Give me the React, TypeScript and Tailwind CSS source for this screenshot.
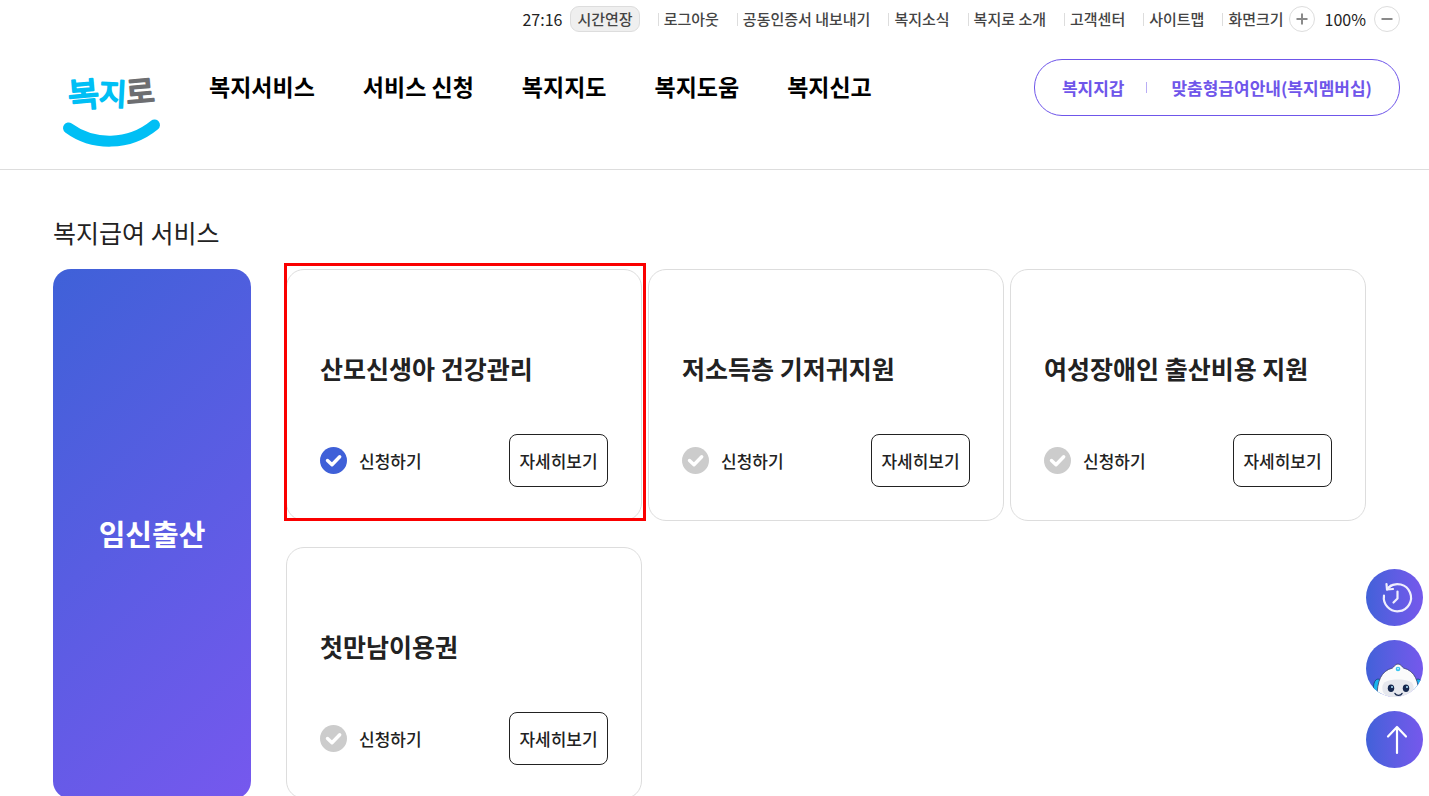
import { useState } from "react";

const utilityLinks = [
  "로그아웃",
  "공동인증서 내보내기",
  "복지소식",
  "복지로 소개",
  "고객센터",
  "사이트맵",
];

const mainMenu = ["복지서비스", "서비스 신청", "복지지도", "복지도움", "복지신고"];

const services = [
  { id: "maternal", name: "산모신생아 건강관리", highlighted: true },
  { id: "diaper", name: "저소득층 기저귀지원", highlighted: false },
  { id: "childbirth", name: "여성장애인 출산비용 지원", highlighted: false },
  { id: "voucher", name: "첫만남이용권", highlighted: false },
];

function Logo() {
  return (
    <svg viewBox="0 0 98 92" className="h-[92px] w-[98px] overflow-visible" role="img" aria-label="복지로">
      <g
        fontFamily="'Noto Sans CJK KR', sans-serif"
        strokeLinejoin="round"
        strokeLinecap="round"
        strokeWidth="2"
      >
        <text x="5" y="50" fontSize="34" fill="#00bff5" stroke="#00bff5" transform="rotate(-5 20 38)">
          복
        </text>
        <text x="36" y="48" fontSize="30" fill="#00bff5" stroke="#00bff5" transform="rotate(3 48 36)">
          지
        </text>
        <text x="63" y="46" fontSize="31" fill="#6d6e71" stroke="#6d6e71" transform="rotate(-5 78 34)">
          로
        </text>
      </g>
      <path d="M5.500 71C30 89 66 89 91.500 68" fill="none" stroke="#00bff5" strokeWidth="11" strokeLinecap="round" />
    </svg>
  );
}

function SizeButton({ label, plus, onClick }: { label: string; plus?: boolean; onClick: () => void }) {
  return (
    <button
      type="button"
      aria-label={label}
      onClick={onClick}
      className="flex size-[26px] items-center justify-center rounded-full border border-[#dddddd] bg-white"
    >
      <svg viewBox="0 0 12 12" className="size-3" stroke="#8a8a8a" strokeWidth="2">
        <path d={plus ? "M0.5 6H11.5M6 0.5V11.5" : "M0.5 6H11.5"} />
      </svg>
    </button>
  );
}

function Header() {
  const [zoom, setZoom] = useState(100);
  return (
    <header className="border-b border-[#dddddd] pt-1.5 pr-[29px] pb-5 pl-[63px]">
      <div className="flex h-[26px] items-center justify-end text-[15px] font-medium whitespace-nowrap text-[#444444]">
        <span className="text-base font-normal text-[#222222]">27:16</span>
        <button
          type="button"
          className="mr-[18px] ml-2 flex h-[26px] items-center rounded-[9px] border border-[#dddddd] bg-[#efefef] px-1.5"
        >
          시간연장
        </button>
        <nav aria-label="바로가기" className="mr-[18px] flex items-center gap-[18px]">
          {utilityLinks.map((link) => (
            <span key={link} className="flex items-center gap-[5px]">
              <span className="h-[13px] w-px bg-[#dddddd]" />
              <a href="#">{link}</a>
            </span>
          ))}
        </nav>
        <span className="mr-[5px] flex items-center gap-[5px]">
          <span className="h-[13px] w-px bg-[#dddddd]" />
          화면크기
        </span>
        <SizeButton label="확대" plus onClick={() => setZoom(zoom + 10)} />
        <span className="mr-2 ml-2.5 text-base font-normal text-[#222222]">{zoom}%</span>
        <SizeButton label="축소" onClick={() => setZoom(zoom - 10)} />
      </div>
      <div className="mt-[25px] flex items-start">
        <a href="#" className="mr-12">
          <Logo />
        </a>
        <nav
          aria-label="주 메뉴"
          className="flex h-[58px] items-center gap-12 text-[23px] font-bold whitespace-nowrap text-black"
        >
          {mainMenu.map((item) => (
            <a key={item} href="#">
              {item}
            </a>
          ))}
        </nav>
        <div className="mt-0.5 ml-auto flex h-[57px] items-center rounded-[28px] border border-[#6f56ea] px-[27px] text-[17px] font-bold whitespace-nowrap text-[#6f56ea]">
          <a href="#">복지지갑</a>
          <span className="mr-6 ml-[22px] h-[11px] w-px bg-[#b9adf5]" />
          <a href="#">맞춤형급여안내(복지멤버십)</a>
        </div>
      </div>
    </header>
  );
}

function ServiceCard({
  id,
  name,
  highlighted,
}: {
  id: string;
  name: string;
  highlighted: boolean;
}) {
  return (
    <article className="relative rounded-[18px] border border-[#dddddd] px-[33px] pt-20 pb-[33px]">
      {highlighted && (
        <span className="pointer-events-none absolute -top-[7px] -right-[5px] -bottom-px -left-[3px] border-3 border-[#fa0000]" />
      )}
      <h3 className="text-[25px] leading-9 font-bold whitespace-nowrap text-[#222222]">{name}</h3>
      <div className="mt-12 flex items-center justify-between text-[17px] font-medium text-[#222222]">
        <label htmlFor={id} className="flex items-center gap-3">
          <span className="grid size-[27px]">
            <input
              id={id}
              type="checkbox"
              defaultChecked={highlighted}
              className="peer col-start-1 row-start-1 size-[27px] appearance-none rounded-full bg-[#cccccc] checked:bg-[#3f60d8]"
            />
            <svg
              viewBox="0 0 27 27"
              className="pointer-events-none relative col-start-1 row-start-1 size-[27px]"
              fill="none"
              stroke="#ffffff"
              strokeWidth="3.4"
              strokeLinecap="round"
              strokeLinejoin="round"
            >
              <path d="M7.500 13.500L12 17.800L19.700 9.800" />
            </svg>
          </span>
          신청하기
        </label>
        <button
          type="button"
          className="flex h-[53px] w-[99px] items-center justify-center rounded-lg border border-[#222222] whitespace-nowrap"
        >
          자세히보기
        </button>
      </div>
    </article>
  );
}

const roundButton =
  "flex size-[57px] items-center justify-center overflow-hidden rounded-full bg-linear-to-r from-[#4161d9] to-[#7558ec]";

function QuickButtons() {
  return (
    <div className="fixed right-1.5 bottom-7 flex flex-col gap-3.5">
      <button type="button" aria-label="최근 이용 내역" className={roundButton}>
        <svg
          viewBox="0 0 57 57"
          className="size-[57px]"
          fill="none"
          stroke="#f0effd"
          strokeWidth="2.2"
          strokeLinecap="round"
          strokeLinejoin="round"
        >
          <path d="M18 26.5A13.6 13.6 0 1 0 23 18" />
          <path d="M20.5 15L21 20.5L27 20" />
          <path d="M21 20.5L25 16.5" />
          <path d="M31.5 22.5V29.5L27.5 33.5" />
        </svg>
      </button>
      <button type="button" aria-label="챗봇 상담" className={roundButton}>
        <svg viewBox="0 0 57 57" className="size-[57px]">
          <ellipse cx="12" cy="47" rx="4.5" ry="8" fill="#19b5ee" stroke="#1b3c78" strokeWidth="0.8" />
          <ellipse cx="52" cy="47" rx="4.5" ry="8" fill="#19b5ee" stroke="#1b3c78" strokeWidth="0.8" />
          <path
            d="M11 58C11 41 15 31 26.500 28C28 27 29 24 32 24C35 24 36 27 37.500 28C49 31 53 41 53 58Z"
            fill="#fbfbfb"
            stroke="#39406f"
            strokeWidth="0.8"
          />
          <path d="M17 52C14 42 21 39.500 32 39.500C43 39.500 50 42 47 52C43 60 21 60 17 52Z" fill="#e6e8ee" />
          <circle cx="32" cy="29" r="2.300" fill="#35c5f0" />
          <circle cx="32" cy="28.600" r="0.900" fill="#d6f5ff" />
          <ellipse cx="25" cy="48.300" rx="3.200" ry="3.700" fill="#16284f" />
          <ellipse cx="40" cy="48.300" rx="3.200" ry="3.700" fill="#16284f" />
          <circle cx="26" cy="47" r="1.100" fill="#a8dcf6" />
          <circle cx="41" cy="47" r="1.100" fill="#a8dcf6" />
          <path d="M29 53.500C30 56 35 56 36 53.500" fill="none" stroke="#16284f" strokeWidth="1.400" strokeLinecap="round" />
        </svg>
      </button>
      <button type="button" aria-label="맨 위로" className={roundButton}>
        <svg
          viewBox="0 0 57 57"
          className="size-[57px]"
          fill="none"
          stroke="#ffffff"
          strokeWidth="2.2"
          strokeLinecap="round"
          strokeLinejoin="round"
        >
          <path d="M31 42V16M22 25.500L31 16L40 25.500" />
        </svg>
      </button>
    </div>
  );
}

export default function App() {
  return (
    <div className="min-h-screen bg-white font-['Noto_Sans_CJK_KR',sans-serif]">
      <Header />
      <main className="pt-11 pr-[63px] pl-[53px]">
        <h2 className="mb-[19px] text-[25px] leading-9 text-[#222222]">복지급여 서비스</h2>
        <div className="flex gap-[35px]">
          <div className="flex w-[198px] shrink-0 items-center justify-center rounded-[18px] bg-linear-[135deg] from-[#3f61d8] to-[#7658ee] text-[29px] font-bold text-white">
            임신출산
          </div>
          <div className="grid grow grid-cols-3 gap-x-1.5 gap-y-[26px]">
            {services.map((service) => (
              <ServiceCard key={service.id} {...service} />
            ))}
          </div>
        </div>
      </main>
      <QuickButtons />
    </div>
  );
}
